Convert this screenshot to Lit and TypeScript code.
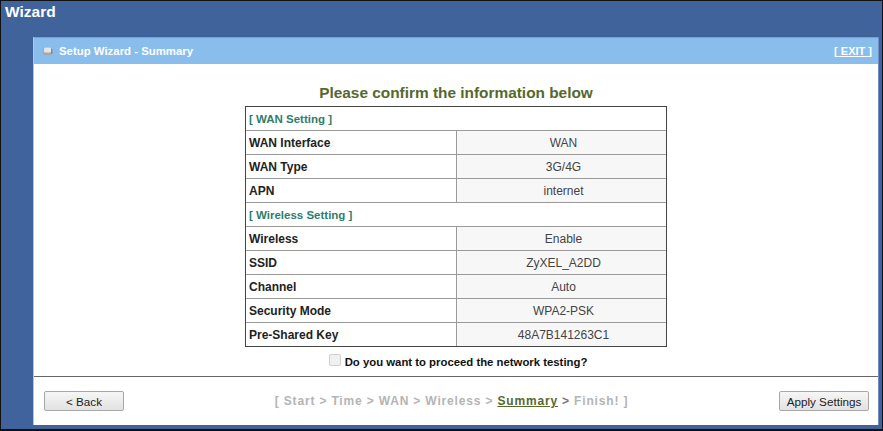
import { LitElement, html, css } from "lit";
import { customElement } from "lit/decorators.js";

type Row = { section: string } | { label: string; value: string };

const ROWS: Row[] = [
  { section: "[ WAN Setting ]" },
  { label: "WAN Interface", value: "WAN" },
  { label: "WAN Type", value: "3G/4G" },
  { label: "APN", value: "internet" },
  { section: "[ Wireless Setting ]" },
  { label: "Wireless", value: "Enable" },
  { label: "SSID", value: "ZyXEL_A2DD" },
  { label: "Channel", value: "Auto" },
  { label: "Security Mode", value: "WPA2-PSK" },
  { label: "Pre-Shared Key", value: "48A7B141263C1" },
];

@customElement("app-root")
export class AppRoot extends LitElement {
  static styles = css`
    :host {
      display: block;
      width: 883px;
      height: 431px;
      font-family: "Liberation Sans", Arial, sans-serif;
    }
    .frame {
      box-sizing: border-box;
      width: 883px;
      height: 431px;
      background: #41639c;
      border-style: solid;
      border-color: #111;
      border-width: 1px 1px 2px 1px;
      display: flex;
      flex-direction: column;
    }
    .title {
      height: 36px;
      flex: none;
      box-sizing: border-box;
      padding: 2px 0 0 4px;
      font-size: 15.5px;
      line-height: 18px;
      font-weight: bold;
      color: #fff;
    }
    .panel {
      box-sizing: border-box;
      margin: 0 3px 0 32px;
      height: 388px;
      flex: none;
      background: #fff;
      border-left: 1px solid #a9c6ea;
      border-right: 1px solid #6f8fc0;
      display: flex;
      flex-direction: column;
    }
    .bar {
      height: 27px;
      flex: none;
      box-sizing: border-box;
      background: #88bdec;
      border-top: 1px solid #7c9ccb;
      display: flex;
      align-items: center;
      padding: 0 6px 1px 9px;
      color: #fff;
      font-size: 11.4px;
      font-weight: bold;
    }
    .bar svg {
      margin-right: 6px;
      flex: none;
    }
    .bar .name {
      flex: 1;
    }
    .bar .exit {
      font-size: 11px;
      font-weight: bold;
      text-decoration: underline;
    }
    .content {
      flex: 1;
      display: flex;
      flex-direction: column;
      align-items: center;
    }
    h1 {
      margin: 19px 0 0;
      height: 23px;
      font-size: 15.4px;
      line-height: 19px;
      font-weight: bold;
      color: #56682c;
    }
    .table {
      box-sizing: border-box;
      width: 422px;
      border: 1px solid #444;
      display: flex;
      flex-direction: column;
    }
    .row {
      height: 24px;
      box-sizing: border-box;
      display: grid;
      grid-template-columns: 211px 1fr;
      border-top: 1px solid #9a9a9a;
      font-size: 12px;
    }
    .row:first-child {
      border-top: 0;
      height: 23px;
    }
    .section {
      display: flex;
      align-items: center;
      padding-left: 3px;
      font-size: 11.5px;
      font-weight: bold;
      color: #2f7d6c;
      grid-column: 1 / 3;
    }
    .label {
      display: flex;
      align-items: center;
      padding-left: 3px;
      font-weight: bold;
      color: #222;
      border-right: 1px solid #9a9a9a;
    }
    .value {
      display: flex;
      align-items: center;
      justify-content: center;
      padding-left: 4px;
      font-size: 12px;
      background: #f7f7f7;
      color: #444;
    }
    .confirm {
      margin: 6px 0 0 4px;
      height: 17px;
      display: flex;
      align-items: center;
      font-size: 11.35px;
      font-weight: bold;
      color: #111;
    }
    .box {
      width: 12px;
      height: 12px;
      box-sizing: border-box;
      border: 1px solid #d0d0d0;
      border-radius: 2px;
      background: #f0f0f0;
      margin: -3px 4px 0 0;
    }
    .footer {
      height: 49px;
      flex: none;
      box-sizing: border-box;
      border-top: 1px solid #666;
      display: flex;
      align-items: center;
      justify-content: space-between;
      padding: 0 9px 0 10px;
    }
    button {
      box-sizing: border-box;
      height: 20px;
      margin: 0;
      padding: 0;
      border: 1px solid #a8a8a8;
      border-radius: 2px;
      background: linear-gradient(#f6f6f6, #e2e2e2);
      font-family: inherit;
      font-size: 11.7px;
      color: #222;
    }
    .back {
      width: 80px;
    }
    .apply {
      width: 90px;
    }
    .steps {
      font-size: 12px;
      font-weight: bold;
      letter-spacing: 0.83px;
      color: #b4b4b4;
      white-space: pre;
    }
    .steps .cur {
      color: #56682c;
      text-decoration: underline;
    }
    .steps .sep {
      color: #777;
    }
  `;

  private renderRow(r: Row) {
    if ("section" in r) {
      return html`<div class="row"><div class="section">${r.section}</div></div>`;
    }
    return html`<div class="row">
      <div class="label">${r.label}</div>
      <div class="value">${r.value}</div>
    </div>`;
  }

  render() {
    return html`<div class="frame">
      <div class="title">Wizard</div>
      <div class="panel">
        <div class="bar">
          <svg width="10" height="10" viewBox="0 0 10 10">
            <rect x="0" y="1" width="9" height="8" rx="1.5" fill="#a8a8a8" />
            <rect x="1" y="1.5" width="7" height="5" rx="1" fill="#e6e6e6" />
            <rect x="8" y="3" width="1.5" height="5" fill="#8a8a8a" />
          </svg>
          <span class="name">Setup Wizard - Summary</span>
          <span class="exit">[ EXIT ]</span>
        </div>
        <div class="content">
          <h1>Please confirm the information below</h1>
          <div class="table">${ROWS.map((r) => this.renderRow(r))}</div>
          <div class="confirm">
            <span class="box"></span>Do you want to proceed the network testing?
          </div>
        </div>
        <div class="footer">
          <button class="back">&lt; Back</button>
          <div class="steps">[ Start &gt; Time &gt; WAN &gt; Wireless &gt; <span class="cur">Summary</span> <span class="sep">&gt;</span> Finish! ]</div>
          <button class="apply">Apply Settings</button>
        </div>
      </div>
    </div>`;
  }
}
